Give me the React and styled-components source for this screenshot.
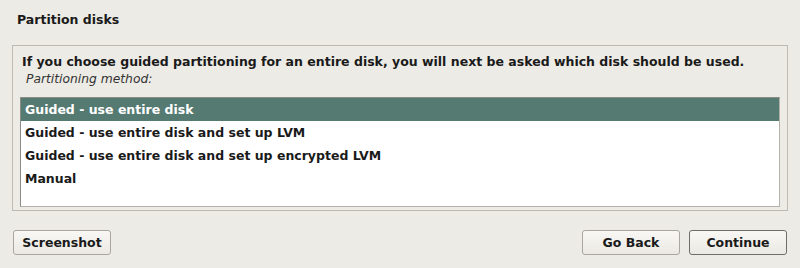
import React, { useState } from 'react';
import styled, { createGlobalStyle } from 'styled-components';

const GlobalStyle = createGlobalStyle`
    html, body {
        margin: 0;
        padding: 0;
        background: #edebe5;
    }
    body {
        font-family: "DejaVu Sans", "Liberation Sans", sans-serif;
        color: #1a1a1a;
    }
`;

const methods = [
    'Guided - use entire disk',
    'Guided - use entire disk and set up LVM',
    'Guided - use entire disk and set up encrypted LVM',
    'Manual',
];

const App = () => {
    const [selected, setSelected] = useState(0);

    return (
        <>
            <GlobalStyle />
            <Page>
                <Title>Partition disks</Title>
                <Frame>
                    <Question>
                        If you choose guided partitioning for an entire disk, you will next be asked which disk should be used.
                    </Question>
                    <Label>Partitioning method:</Label>
                    <List>
                        {methods.map((m, i) => (
                            <Row key={m} $active={i === selected} onClick={() => setSelected(i)}>
                                {m}
                            </Row>
                        ))}
                    </List>
                </Frame>
                <Footer>
                    <Button>Screenshot</Button>
                    <Spacer />
                    <Button>Go Back</Button>
                    <Button $primary>Continue</Button>
                </Footer>
            </Page>
        </>
    );
};

export default App;

const Page = styled.div`
    width: 800px;
    height: 268px;
    display: flex;
    flex-direction: column;
    box-sizing: border-box;
`;

const Title = styled.div`
    font-size: 12.5px;
    font-weight: bold;
    line-height: 16px;
    padding: 12px 17px 0;
    height: 45px;
    box-sizing: border-box;
`;

const Frame = styled.div`
    margin: 0 12px;
    height: 166px;
    box-sizing: border-box;
    border: 1px solid #bdbab0;
    padding: 7px 7px 0 7px;
    display: flex;
    flex-direction: column;
`;

const Question = styled.div`
    font-size: 12.5px;
    font-weight: bold;
    padding-left: 2px;
    line-height: 18px;
    white-space: nowrap;
`;

const Label = styled.div`
    font-size: 12.3px;
    font-style: italic;
    color: #333;
    padding-left: 6px;
    line-height: 16px;
    margin-bottom: 10px;
`;

const List = styled.div`
    height: 110px;
    box-sizing: border-box;
    background: #fff;
    border: 1px solid #b4b2aa;
    border-top-color: #8e8c86;
    border-left-color: #8e8c86;
    display: flex;
    flex-direction: column;
`;

const Row = styled.div`
    height: 23px;
    line-height: 23px;
    padding-left: 4px;
    font-size: 12.5px;
    font-weight: bold;
    background: ${p => (p.$active ? '#557a72' : 'transparent')};
    color: ${p => (p.$active ? '#fff' : '#1a1a1a')};
    cursor: default;
`;

const Footer = styled.div`
    display: flex;
    align-items: center;
    gap: 9px;
    padding: 19px 13px 0 13px;
`;

const Spacer = styled.div`
    flex: 1;
`;

const Button = styled.button`
    width: 98px;
    height: 25px;
    font-family: "DejaVu Sans", sans-serif;
    font-size: 12.5px;
    font-weight: bold;
    color: #1a1a1a;
    border-radius: 3px;
    border: 1px solid ${p => (p.$primary ? '#6e6d68' : '#a8a69f')};
    background: linear-gradient(#f8f7f4, #ebe9e3);
    padding: 0;
`;
